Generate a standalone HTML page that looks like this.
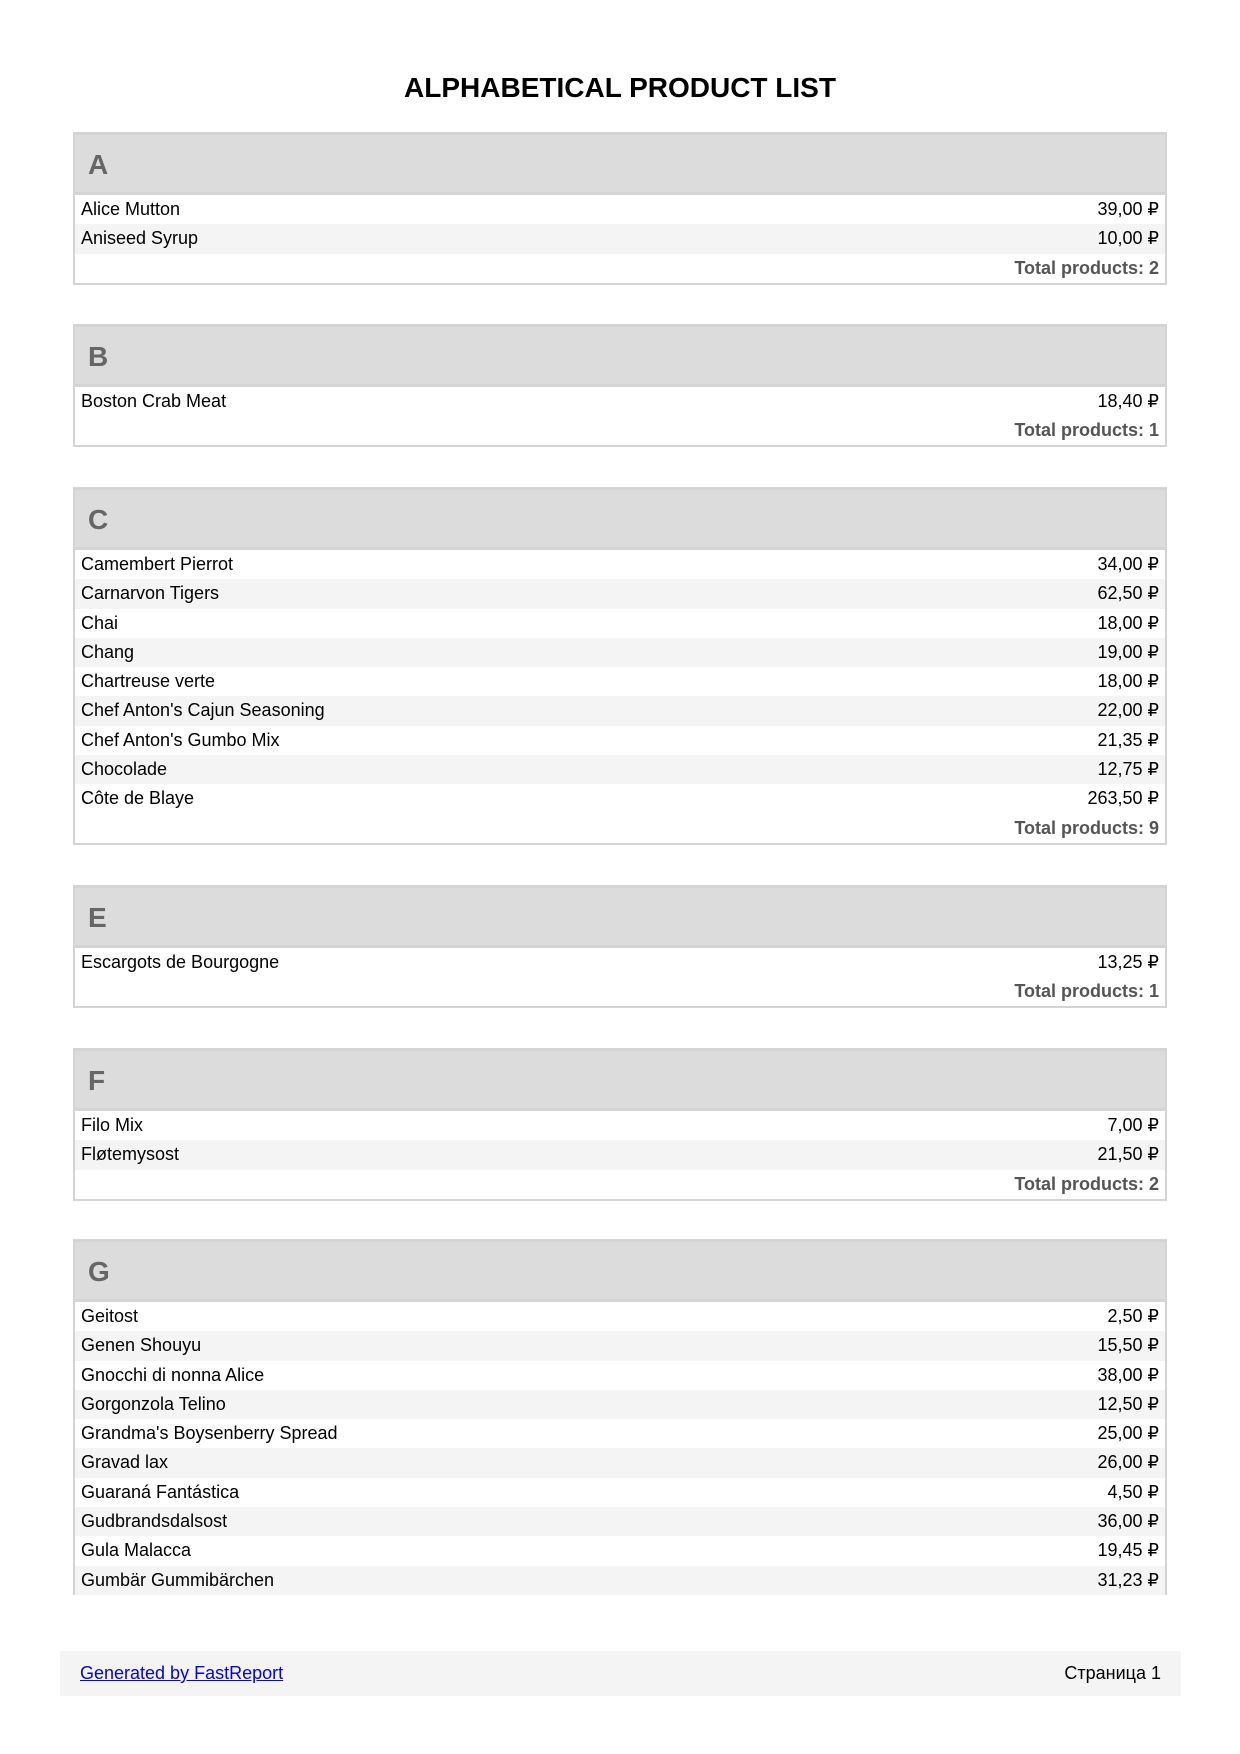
<!DOCTYPE html>
<html><head><meta charset="utf-8"><style>
body{margin:0;width:1240px;height:1754px;background:#fff;position:relative;font-family:"Liberation Sans","DejaVu Sans",sans-serif;color:#000}
h1{position:absolute;top:70px;left:0;width:1240px;margin:0;text-align:center;font-size:28px;font-weight:bold;line-height:36px}
.box{position:absolute;left:73px;width:1090px;border:2px solid #d4d4d4;border-top-width:3px}
.box.open{border-bottom:none}
.hd{background:#dcdcdc;border-bottom:3px solid #d4d4d4;font-size:28px;font-weight:bold;color:#666;line-height:60px;padding-left:13px;box-sizing:border-box;height:60px}
.r{height:29.3px;line-height:29px;font-size:18px;padding:0 6px;display:flex;justify-content:space-between}
.r:nth-child(odd){background:#f4f4f4}
.t{height:29px;line-height:28px;text-align:right;font-size:18px;font-weight:bold;color:#555;padding-right:6px}
.ft{position:absolute;left:60px;top:1651px;width:1121px;height:45px;background:#f4f4f4;font-size:18px;line-height:45px}
.ft a{position:absolute;left:20px;color:#00e;text-decoration:underline}
.ft span{position:absolute;right:20px}
</style></head><body>
<h1>ALPHABETICAL PRODUCT LIST</h1>

<div class="box" style="top:132px"><div class="hd">A</div>
<div class="r"><span>Alice Mutton</span><span>39,00 ₽</span></div>
<div class="r"><span>Aniseed Syrup</span><span>10,00 ₽</span></div>
<div class="t">Total products: 2</div></div>

<div class="box" style="top:324px"><div class="hd">B</div>
<div class="r"><span>Boston Crab Meat</span><span>18,40 ₽</span></div>
<div class="t">Total products: 1</div></div>

<div class="box" style="top:487px"><div class="hd">C</div>
<div class="r"><span>Camembert Pierrot</span><span>34,00 ₽</span></div>
<div class="r"><span>Carnarvon Tigers</span><span>62,50 ₽</span></div>
<div class="r"><span>Chai</span><span>18,00 ₽</span></div>
<div class="r"><span>Chang</span><span>19,00 ₽</span></div>
<div class="r"><span>Chartreuse verte</span><span>18,00 ₽</span></div>
<div class="r"><span>Chef Anton's Cajun Seasoning</span><span>22,00 ₽</span></div>
<div class="r"><span>Chef Anton's Gumbo Mix</span><span>21,35 ₽</span></div>
<div class="r"><span>Chocolade</span><span>12,75 ₽</span></div>
<div class="r"><span>Côte de Blaye</span><span>263,50 ₽</span></div>
<div class="t">Total products: 9</div></div>

<div class="box" style="top:885px"><div class="hd">E</div>
<div class="r"><span>Escargots de Bourgogne</span><span>13,25 ₽</span></div>
<div class="t">Total products: 1</div></div>

<div class="box" style="top:1048px"><div class="hd">F</div>
<div class="r"><span>Filo Mix</span><span>7,00 ₽</span></div>
<div class="r"><span>Fløtemysost</span><span>21,50 ₽</span></div>
<div class="t">Total products: 2</div></div>

<div class="box open" style="top:1239px"><div class="hd">G</div>
<div class="r"><span>Geitost</span><span>2,50 ₽</span></div>
<div class="r"><span>Genen Shouyu</span><span>15,50 ₽</span></div>
<div class="r"><span>Gnocchi di nonna Alice</span><span>38,00 ₽</span></div>
<div class="r"><span>Gorgonzola Telino</span><span>12,50 ₽</span></div>
<div class="r"><span>Grandma's Boysenberry Spread</span><span>25,00 ₽</span></div>
<div class="r"><span>Gravad lax</span><span>26,00 ₽</span></div>
<div class="r"><span>Guaraná Fantástica</span><span>4,50 ₽</span></div>
<div class="r"><span>Gudbrandsdalsost</span><span>36,00 ₽</span></div>
<div class="r"><span>Gula Malacca</span><span>19,45 ₽</span></div>
<div class="r"><span>Gumbär Gummibärchen</span><span>31,23 ₽</span></div>
</div>

<div class="ft"><a>Generated by FastReport</a><span>Страница 1</span></div>
</body></html>
